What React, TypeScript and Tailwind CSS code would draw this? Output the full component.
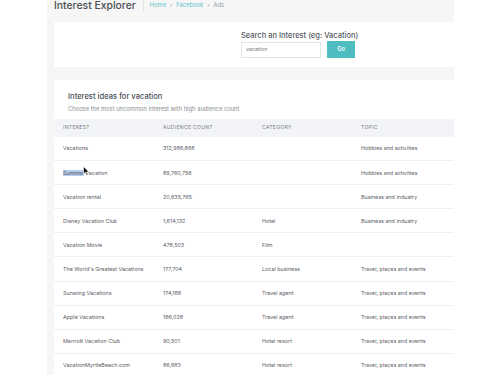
import React from 'react';

type Row = {
  interest: string;
  audience: string;
  category: string;
  topic: string;
};

const rows: Row[] = [
  { interest: 'Vacations', audience: '312,986,868', category: '', topic: 'Hobbies and activities' },
  { interest: 'Summer vacation', audience: '89,760,756', category: '', topic: 'Hobbies and activities' },
  { interest: 'Vacation rental', audience: '20,635,765', category: '', topic: 'Business and industry' },
  { interest: 'Disney Vacation Club', audience: '1,614,132', category: 'Hotel', topic: 'Business and industry' },
  { interest: 'Vacation Movie', audience: '478,503', category: 'Film', topic: '' },
  { interest: "The World's Greatest Vacations", audience: '177,704', category: 'Local business', topic: 'Travel, places and events' },
  { interest: 'Sunwing Vacations', audience: '174,166', category: 'Travel agent', topic: 'Travel, places and events' },
  { interest: 'Apple Vacations', audience: '166,028', category: 'Travel agent', topic: 'Travel, places and events' },
  { interest: 'Marriott Vacation Club', audience: '90,501', category: 'Hotel resort', topic: 'Travel, places and events' },
  { interest: 'VacationMyrtleBeach.com', audience: '86,683', category: 'Hotel resort', topic: 'Travel, places and events' },
];

// mouse pointer sitting over the selected word
const Cursor = () => (
  <svg
    className="absolute left-[20px] top-[-3px]"
    width="7"
    height="10"
    viewBox="0 0 7 10"
  >
    <path d="M0.5 0.5 L0.5 8 L2.3 6.3 L3.6 9.3 L4.8 8.8 L3.5 5.9 L6 5.9 Z" fill="#111" stroke="#fff" strokeWidth="0.6" />
  </svg>
);

const InterestCell = ({ text, index }: { text: string; index: number }) => {
  if (index === 1) {
    return (
      <div className="relative w-[100px] shrink-0">
        <span className="bg-[#b7cdf0]">Summer</span> vacation
        <Cursor />
      </div>
    );
  }
  return <div className="w-[100px] shrink-0 whitespace-nowrap">{text}</div>;
};

const SearchCard = () => (
  <div className="h-[45px] shrink-0 bg-white flex pl-[187px]">
    <div className="flex flex-col pt-[9px]">
      <p className="text-[7.5px] leading-[9px] font-medium text-[#555a60] whitespace-nowrap">
        Search an Interest (eg: Vacation)
      </p>
      <div className="flex items-center gap-[6px] mt-[1px]">
        <div className="w-[80px] h-[16px] border border-[#e4e4e4] flex items-center px-[4px] text-[5.3px] text-[#777]">
          vacation
        </div>
        <button className="w-[28px] h-[17px] bg-[#4dbdc1] text-white text-[5.6px] font-semibold flex items-center justify-center">
          Go
        </button>
      </div>
    </div>
  </div>
);

const ResultsCard = () => (
  <div className="bg-white flex-1 pt-[12px]">
    <div className="pl-[14px]">
      <p className="text-[7.6px] leading-[10px] font-medium text-[#4a4f55]">Interest ideas for vacation</p>
      <p className="text-[5.8px] leading-[8px] mt-[3px] text-[#8a8f94] whitespace-nowrap">
        Choose the most uncommon interest with high audience count
      </p>
    </div>
    <div className="mt-[6px]">
      <div className="h-[18px] bg-[#f3f4f7] flex items-center pl-[9px] text-[5px] tracking-[0.35px] text-[#7b8086]">
        <div className="w-[100px]">INTEREST</div>
        <div className="w-[99px]">AUDIENCE COUNT</div>
        <div className="w-[99px]">CATEGORY</div>
        <div>TOPIC</div>
      </div>
      {rows.map((r, i) => (
        <div
          key={r.interest}
          className="h-[24.1px] flex items-center pl-[9px] border-b border-[#efefef] text-[5.4px] text-[#5b6066]"
        >
          <InterestCell text={r.interest} index={i} />
          <div className="w-[99px] shrink-0">{r.audience}</div>
          <div className="w-[99px] shrink-0">{r.category}</div>
          <div className="whitespace-nowrap">{r.topic}</div>
        </div>
      ))}
    </div>
  </div>
);

export default function App() {
  return (
    <div className="w-[500px] h-[375px] overflow-hidden bg-white flex font-['Inter',sans-serif]">
      <div className="w-[47px] shrink-0" />
      <div className="w-[407px] shrink-0 bg-[#f6f6f6] pl-[7px] flex flex-col">
        <div className="h-[22px] shrink-0 flex items-start">
          <h1 className="text-[10.4px] leading-[12px] font-medium text-[#4a4e54] whitespace-nowrap">
            Interest Explorer
          </h1>
          <div className="w-px h-[11px] bg-[#e2e2e2] ml-[7px]" />
          <div className="flex items-center gap-[4px] ml-[6px] text-[5.8px] leading-[10px] text-[#9aa0a6]">
            <span className="text-[#5cc3c7]">Home</span>
            <span>›</span>
            <span className="text-[#5cc3c7]">Facebook</span>
            <span>›</span>
            <span>Ads</span>
          </div>
        </div>
        <SearchCard />
        <div className="h-[13px] shrink-0" />
        <ResultsCard />
      </div>
      <div className="flex-1" />
    </div>
  );
}
